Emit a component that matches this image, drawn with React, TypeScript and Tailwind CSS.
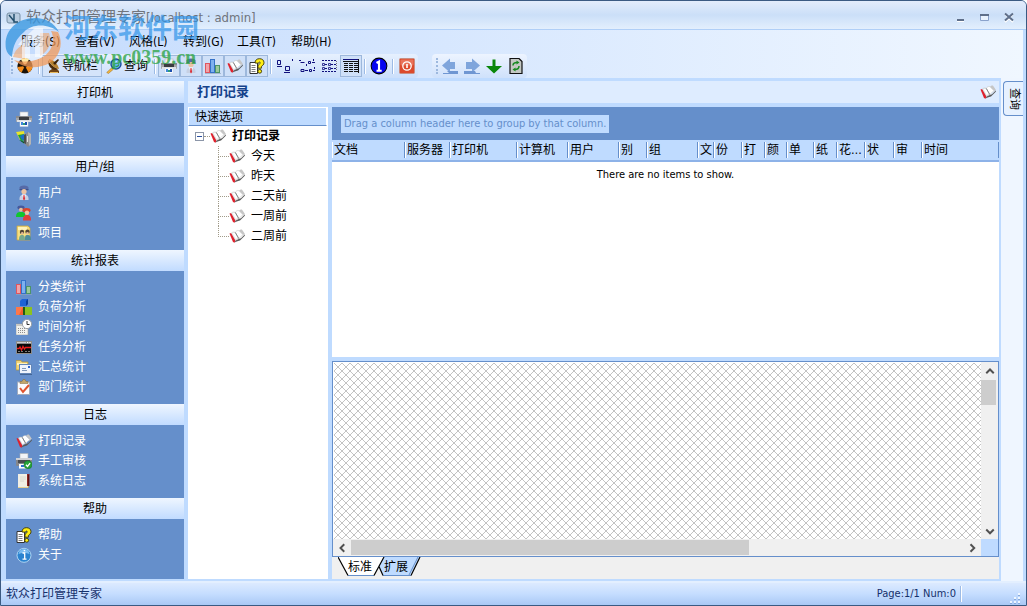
import React from "react";

type IconProps = { className?: string };

function Svg({ children, className = "size-4" }: { children: React.ReactNode; className?: string }) {
  return (
    <svg viewBox="0 0 16 16" className={`shrink-0 ${className}`} aria-hidden="true">
      {children}
    </svg>
  );
}

const PrinterIcon = ({ className }: IconProps) => (
  <Svg className={className}>
    <rect x="4" y="1" width="8" height="5" fill="#f4f6f8" stroke="#b5b9bf" strokeWidth=".6" />
    <rect x="0" y="5" width="16" height="6" rx="1" fill="#a4a6aa" />
    <rect x="0" y="5" width="16" height="2" fill="#8a8c90" />
    <rect x="3" y="6" width="10" height="3" fill="#3a3c40" />
    <rect x="1" y="9" width="14" height="2" fill="#dfe1e4" />
    <rect x="4" y="10" width="8" height="5.500" fill="#fff" stroke="#c9d2dc" strokeWidth=".5" />
    <rect x="5" y="11" width="2" height="3" fill="#3f86dc" />
    <rect x="7" y="12" width="2" height="2" fill="#2b9c78" />
    <rect x="9" y="11" width="2" height="3" fill="#1d4fae" />
  </Svg>
);

const ServerIcon = () => (
  <Svg>
    <path d="M0 1l8-1 1 8-5 1z" fill="#e9e42a" />
    <path d="M2 4l6-1 2 6-5 1z" fill="#18a336" />
    <path d="M4 5l4-2 2 5-4 1z" fill="#1c6fc4" />
    <path d="M3 9l6 2-1 1.500z" fill="#0b5c1d" />
    <path d="M8 4l4-3 3 2v10l-3 3-4-4z" fill="#8c8c8c" />
    <path d="M8 4l2-1v10l-2-1z" fill="#4d4d4d" />
    <path d="M12 1l3 2v10l-2 2z" fill="#b5b5b5" />
    <path d="M11 5h1v6h-1z" fill="#e0e0e0" />
  </Svg>
);

const UserIcon = ({ className }: IconProps) => (
  <Svg className={className}>
    <ellipse cx="8" cy="3" rx="4.600" ry="2.500" fill="#566aa8" />
    <path d="M3 4.200h10l-1 1H4z" fill="#34457d" />
    <circle cx="8" cy="6.500" r="2.600" fill="#ecc4a4" />
    <path d="M3.500 15c-.3-4 1.500-5.500 4.500-5.500s4.800 1.500 4.500 5.500z" fill="#c6d0e3" />
    <path d="M6 9.500h4L8 15z" fill="#fff" />
    <path d="M7.500 10h1l.6 4-1.100 1.500L7 14z" fill="#d8323c" />
  </Svg>
);

const GroupIcon = () => (
  <Svg>
    <ellipse cx="5" cy="2.500" rx="3.600" ry="2" fill="#46589a" />
    <circle cx="5" cy="4.800" r="2" fill="#e6bd9b" />
    <path d="M0 12c0-4 1.500-5 5-5s4.500 1 4 5z" fill="#10c72c" />
    <ellipse cx="10.500" cy="5.300" rx="4" ry="2.200" fill="#d9442c" />
    <circle cx="11" cy="7.800" r="2.200" fill="#f0c49d" />
    <path d="M7 15.500c-.2-3.500 1-5.500 4-5.500s4.200 2 4 5.500z" fill="#e0403a" />
  </Svg>
);

const ProjectIcon = () => (
  <Svg>
    <path d="M1 1h11l2 2v12H1z" fill="#f7df7f" stroke="#c9a642" strokeWidth=".8" />
    <path d="M2 2h9v3H2z" fill="#fff3b8" />
    <circle cx="6" cy="7" r="2.200" fill="#504538" />
    <circle cx="11.500" cy="6.800" r="2.200" fill="#504538" />
    <circle cx="6.300" cy="8.200" r="1.300" fill="#e2b994" />
    <circle cx="11.500" cy="8.200" r="1.300" fill="#e2b994" />
    <path d="M3 15c0-4 1-5 3-5s3 1 3 5z" fill="#77a98b" />
    <path d="M9 15c0-4 0-5 2.500-5s3.500 1 3.500 5z" fill="#4d8d9b" />
  </Svg>
);

const ChartIcon = () => (
  <Svg>
    <rect x=".5" y="5.500" width="4" height="9" fill="#f0a3a8" stroke="#e0555e" />
    <rect x="5.500" y="1.500" width="4" height="13" fill="#7db0ee" stroke="#3572c8" />
    <rect x="10.500" y="7.500" width="4" height="7" fill="#9cc99c" stroke="#4c9468" />
    <path d="M0 15.500h16" stroke="#8fa3c0" strokeWidth=".7" />
  </Svg>
);

const CubesIcon = () => (
  <Svg>
    <path d="M4 2l2-2h6v5l-2 2H4z" fill="#1d62d6" />
    <path d="M10 2l2-2v5l-2 2z" fill="#0c3d9b" />
    <rect x="0" y="8" width="7" height="8" fill="#f15a2c" />
    <path d="M0 8h7l-4 8H0z" fill="#ff7748" />
    <rect x="7" y="8" width="2" height="8" fill="#1d5c14" />
    <rect x="9" y="8" width="7" height="8" fill="#8cc21f" />
  </Svg>
);

const TimeIcon = () => (
  <Svg>
    <rect x="0" y="5" width="12" height="11" fill="#f2f2ee" stroke="#9a9a94" strokeWidth=".6" />
    <rect x="0" y="5" width="12" height="2" fill="#c8c8c4" />
    <path d="M2 9.500h8M2 11.500h8M2 13.500h8" stroke="#8e8e8e" strokeDasharray="1 1" />
    <circle cx="11" cy="5" r="4.600" fill="#fff" stroke="#9aa0a6" />
    <path d="M11 2v3.500h2.500" fill="none" stroke="#333" />
  </Svg>
);

const TaskIcon = () => (
  <Svg>
    <rect x="0" y="2" width="16" height="13" fill="#8b8b8b" />
    <path d="M1 3.500h9" stroke="#ccc" />
    <path d="M11 3.500h4" stroke="#fff" strokeDasharray="1 .7" />
    <rect x="1" y="5" width="14" height="9" fill="#0a0a0a" />
    <path d="M1 9.500h2l1-1.500 1.500 3 1.500-3.500L8.500 10l1-1.500H15" fill="none" stroke="#ee1c1c" strokeWidth="1.300" />
    <path d="M2 12.500h5M9 12.500h5" stroke="#7a7a7a" strokeDasharray="2 1" />
  </Svg>
);

const SummaryIcon = () => (
  <Svg>
    <path d="M0 1.500h5l1 1.500h6v8H0z" fill="#f2d478" stroke="#b59335" strokeWidth=".7" />
    <path d="M1 4h10v2H1z" fill="#fff2bd" />
    <rect x="3.500" y="5.500" width="12" height="9" fill="#eef4fc" stroke="#6286b8" />
    <rect x="12" y="7" width="2" height="2" fill="#2e66ce" />
    <path d="M6 9.500h4M6 11.500h5" stroke="#7e97ba" />
    <path d="M4 15.500h12" stroke="#34537f" strokeWidth=".7" />
  </Svg>
);

const DeptIcon = () => (
  <Svg>
    <rect x="1.500" y="3" width="12" height="12.500" fill="#fbfbfd" stroke="#9faabd" />
    <path d="M4 4.500V2.500h2l1-2h2l1 2h2v2z" fill="#c3a76b" stroke="#82693a" strokeWidth=".5" />
    <path d="M4 9l3 4 6-7" fill="none" stroke="#e0532d" strokeWidth="2" />
  </Svg>
);

const BookIcon = ({ className }: IconProps) => (
  <Svg className={className}>
    <path d="M.5 5.500L2.300 5l4.200 7.500-1 2.200L4 14z" fill="#e0202c" />
    <path d="M5.500 14.600l1.200-2 3-1.600 2.300-.8 4-4-.2 1.500L11 12.500l-1.800.6-1.500.4z" fill="#5a5a5a" />
    <path d="M2.300 5c1-.9 2.700-1.400 4-.6l3.600 6.300c-1.500-.2-2.500.5-3.300 1.800z" fill="#ededed" stroke="#b4b4b4" strokeWidth=".4" />
    <path d="M3.800 5.500c.8-.5 1.500-.5 2.200-.1l2.600 4.500c-.9.1-1.400.4-1.900.9z" fill="#fff" />
    <path d="M6.300 4.400c.8-1.600 2.200-2.300 3.700-1.700l4.300 4.400c-1.800.4-3.300 1.900-4.400 3.600z" fill="#fff" stroke="#b4b4b4" strokeWidth=".4" />
    <path d="M6.300 4.400l3.600 6.300" stroke="#7d7d7d" strokeWidth=".9" />
    <path d="M10 2.700c.9-1.100 2-1.400 2.900-1.100l2.900 4.200-1.500 1.300z" fill="#c6c6c6" />
  </Svg>
);

const AuditIcon = () => (
  <Svg>
    <rect x="4" y=".5" width="8" height="5" fill="#f2f4f7" stroke="#a9adb3" strokeWidth=".6" />
    <rect x="0" y="5" width="16" height="8" rx="1" fill="#85878c" />
    <rect x="0" y="5" width="16" height="2" fill="#cfd1d5" />
    <rect x="2" y="7" width="12" height="3" fill="#4a4c50" />
    <rect x="3" y="11" width="8" height="4.500" fill="#fff" />
    <rect x="5" y="12" width="3" height="2" fill="#2d6fd0" />
    <circle cx="12" cy="11.800" r="4" fill="#28a33a" stroke="#117225" strokeWidth=".5" />
    <path d="M10 11.800l1.500 1.700 2.600-3.300" fill="none" stroke="#fff" strokeWidth="1.300" />
  </Svg>
);

const LogIcon = () => (
  <Svg>
    <path d="M2 1h9l1 1v13H2z" fill="#f1efe4" />
    <path d="M4 4h6M4 6h6M4 8h4" stroke="#d6d3c6" strokeWidth=".8" />
    <path d="M11 1h2.500v12H11z" fill="#8d2320" />
    <path d="M2 14h9l2-1v1.500H2z" fill="#d9b23f" />
    <path d="M12.500 2v11" stroke="#5d1210" />
  </Svg>
);

const HelpIcon = ({ className }: IconProps) => (
  <Svg className={className}>
    <path d="M1 4.500h7.500v11H1z" fill="#fff" stroke="#333" />
    <path d="M2.500 7.500h4M2.500 9.500h4M2.500 11.500h4M2.500 13.500h4" stroke="#7d7d7d" />
    <path d="M6 5c0-3 2-4.300 4.500-4.300S15 2 15 4.700c0 2-1.500 2.800-2.600 3.800v1.700H9V8.300C9 6.500 11.200 6 11.200 4.700c0-.9-1.600-.8-1.600.5z" fill="#ffee12" stroke="#3b3600" strokeWidth=".9" />
    <circle cx="10.700" cy="13.300" r="1.900" fill="#ffee12" stroke="#3b3600" strokeWidth=".9" />
  </Svg>
);

const AboutIcon = () => (
  <Svg>
    <circle cx="8" cy="8.300" r="7" fill="#2b83cf" stroke="#b9dbf5" strokeWidth=".9" />
    <path d="M2.500 7C3 3.500 5 2 8 2s5 1.500 5.500 5C11 5.500 5 5.500 2.500 7z" fill="#7cbcf0" />
    <path d="M6.500 6h2.200v6M6.500 12.200h4M7.700 3.700h1.500" fill="none" stroke="#fff" strokeWidth="1.300" />
  </Svg>
);

const RadiationIcon = () => (
  <Svg>
    <circle cx="8" cy="8" r="7.600" fill="#191108" />
    <path d="M8 8L3.800 1.300a7.800 7.800 0 018.400 0z" fill="#ffe9a3" />
    <path d="M8 8L.5 9a7.600 7.600 0 004 5.500z" fill="#f28c1c" />
    <path d="M8 8l7.500 1a7.600 7.600 0 01-4 5.500z" fill="#f28c1c" />
    <circle cx="8" cy="8" r="1.800" fill="#191108" />
  </Svg>
);

const CompassIcon = () => (
  <Svg>
    <path d="M3 15h10v-2l-2-2H6l-3 2z" fill="#6e4315" />
    <path d="M2 2c0 5 2 9 7 10l3-1C7 9 4 6 2 2z" fill="#4a2c0c" />
    <path d="M3 1c5 1 9 5 10 10C8 10 3 6 3 1z" fill="#b78332" />
    <path d="M7 5l5-4 1 1-4 5z" fill="#3b240b" />
    <path d="M4 14.500h8" stroke="#e7b759" />
  </Svg>
);

const SearchIcon = () => (
  <Svg>
    <path d="M.7 14.500L6 9.500l1.500 1.700-5 4.300z" fill="#f0b43c" stroke="#9b6a16" strokeWidth=".5" />
    <circle cx="10" cy="6" r="5" fill="#6bb4f0" stroke="#1b4f9c" strokeWidth="1.400" />
    <path d="M7 5.500C7.500 3.500 9 2.700 11 3c-.5 1.500-2 2.500-4 2.500z" fill="#e2f5ff" />
    <path d="M9.500 8.500c1.800.2 3-.6 3.300-2.200" fill="none" stroke="#2f9d4c" strokeWidth="1.200" />
  </Svg>
);

const LargeIconsIcon = () => (
  <Svg>
    <path d="M.5 2.500h3v4h-3zM8.500 8.500h4v4h-4z" fill="none" stroke="#10107c" />
    <path d="M0 8.500h5M7 14.500h6M15.500 1v2" stroke="#10107c" />
  </Svg>
);

const SmallIconsIcon = () => (
  <Svg>
    <path d="M0 2.500h2M1.500 4.500h4M9.500 3.500h2v2h-2zM2 11.500h3v2H2zM10.500 11.500h2v2h-2z" fill="none" stroke="#10107c" />
    <path d="M13 4.500h3M6 12.500h3M14 12.500h2M14.500 1v2M7.500 6v2M15.500 9v2" stroke="#10107c" />
  </Svg>
);

const ListIconsIcon = () => (
  <Svg>
    <path d="M1 2.500h15M1 13.500h15" stroke="#10107c" strokeDasharray="2 1" />
    <path d="M1.500 5.500h2v2h-2zM7.500 5.500h2v2h-2zM1.500 9.500h2v2h-2zM7.500 9.500h2v2h-2z" fill="none" stroke="#10107c" strokeWidth=".8" />
    <path d="M4 6.500h2M10 6.500h5M4 10.500h2M10 10.500h5" stroke="#10107c" strokeDasharray="2 1" />
    <path d="M15.500 3v10" stroke="#777" strokeDasharray="1 1" />
  </Svg>
);

const DetailsIcon = () => (
  <Svg>
    <path d="M0 1.500h16" stroke="#10107c" />
    <path d="M0 3.500h16" stroke="#111" />
    <path d="M1 5.500h14M1 7.500h14M1 9.500h14M1 11.500h14M1 13.500h14" stroke="#111" strokeDasharray="4 1" />
    <path d="M15.500 1v14" stroke="#111" />
  </Svg>
);

const OneIcon = () => (
  <Svg className="size-[18px]">
    <circle cx="8" cy="8" r="7" fill="#0505f0" stroke="#000" strokeWidth=".9" />
    <path d="M5.800 5.300L8 4v8M5.800 12.200h4.600" fill="none" stroke="#fff" strokeWidth="1.900" />
  </Svg>
);

const PowerIcon = () => (
  <Svg>
    <rect x=".5" y=".5" width="15" height="15" rx="1" fill="#dc4a2c" stroke="#c98f83" />
    <rect x="1.500" y="1.500" width="13" height="6" rx="1" fill="#e8735a" />
    <circle cx="8" cy="8" r="4.200" fill="none" stroke="#fff" strokeWidth="1.300" />
    <path d="M8 6v4" stroke="#fff" strokeWidth="1.600" />
  </Svg>
);

const BackIcon = () => (
  <Svg>
    <path d="M0 7.500L8 .5V4h5v7H8v3.500z" fill="#7fa5dc" />
    <path d="M5 13h11v3H1v-1h6z" fill="#6f96d2" />
  </Svg>
);

const ForwardIcon = () => (
  <Svg>
    <path d="M16 7.500L8 .5V4H2v7h6v3.500z" fill="#7fa5dc" />
    <path d="M0 13h11l1 2h4v1H0z" fill="#6f96d2" />
  </Svg>
);

const DownIcon = () => (
  <Svg>
    <path d="M6.500 1.500h3V8H16l-8 7.500L0 8h6.500z" fill="#0a870a" />
  </Svg>
);

const RefreshIcon = () => (
  <Svg>
    <path d="M2 .5h9l3 3v12H2z" fill="#c4c8c4" stroke="#111" strokeWidth="1.200" />
    <path d="M5 7.500c0-2.500 1.500-3 4-3M11 8c0 3-1.500 3.500-4 3.500" fill="none" stroke="#188a22" strokeWidth="1.500" />
    <path d="M8.500 2.500l3 2-3 2zM7.500 9.500l-3 2 3 2z" fill="#188a22" />
  </Svg>
);

const groups = [
  { title: "打印机", items: [{ label: "打印机", Icon: PrinterIcon }, { label: "服务器", Icon: ServerIcon }] },
  {
    title: "用户/组",
    items: [
      { label: "用户", Icon: UserIcon },
      { label: "组", Icon: GroupIcon },
      { label: "项目", Icon: ProjectIcon },
    ],
  },
  {
    title: "统计报表",
    items: [
      { label: "分类统计", Icon: ChartIcon },
      { label: "负荷分析", Icon: CubesIcon },
      { label: "时间分析", Icon: TimeIcon },
      { label: "任务分析", Icon: TaskIcon },
      { label: "汇总统计", Icon: SummaryIcon },
      { label: "部门统计", Icon: DeptIcon },
    ],
  },
  {
    title: "日志",
    items: [
      { label: "打印记录", Icon: BookIcon },
      { label: "手工审核", Icon: AuditIcon },
      { label: "系统日志", Icon: LogIcon },
    ],
  },
  { title: "帮助", items: [{ label: "帮助", Icon: HelpIcon }, { label: "关于", Icon: AboutIcon }] },
];

const columns: { label: string; width?: number }[] = [
  { label: "文档", width: 73 },
  { label: "服务器", width: 45 },
  { label: "打印机", width: 67 },
  { label: "计算机", width: 51 },
  { label: "用户", width: 51 },
  { label: "别", width: 28 },
  { label: "组", width: 51 },
  { label: "文", width: 16 },
  { label: "份", width: 28 },
  { label: "打", width: 23 },
  { label: "颜", width: 22 },
  { label: "单", width: 27 },
  { label: "纸", width: 23 },
  { label: "花…", width: 28 },
  { label: "状", width: 29 },
  { label: "审", width: 28 },
  { label: "时间" },
];

const days = ["今天", "昨天", "二天前", "一周前", "二周前"];

function TitleBar() {
  return (
    <header className="flex h-7 shrink-0 items-end bg-linear-to-b from-[#e3ecfb] via-[#cbdff8] to-[#e3effd] pl-[5px] pr-[9px]">
      <div className="flex flex-1 items-center gap-1 text-[#70747c]">
        <Svg>
          <rect x="1" y="3" width="13" height="10" rx="2" fill="#b9cde0" stroke="#7890a5" />
          <path d="M3 5l5 6M8 4v8h4" fill="none" stroke="#24506e" strokeWidth="1.500" />
        </Svg>
        <h1 className="text-[15px] leading-[22px]">
          软众打印管理专家<span className="text-[13px]">[localhost : admin]</span>
        </h1>
      </div>
      <div className="flex items-center gap-2 pb-1 text-[#5f6f8a]">
        <button type="button" aria-label="最小化" className="size-4">
          <Svg><path d="M4 11h7" stroke="currentColor" strokeWidth="2" /><path d="M4 12.500h7" stroke="#fff" /></Svg>
        </button>
        <button type="button" aria-label="最大化" className="size-4">
          <Svg><path d="M3.500 6.500h8v5h-8z" fill="#eaf3fe" stroke="#8aa2cb" /><path d="M3 6h9" stroke="currentColor" strokeWidth="2" /></Svg>
        </button>
        <button type="button" aria-label="关闭" className="size-4">
          <Svg><path d="M4 5l8 8M12 5l-8 8" stroke="#fff" strokeWidth="2" /><path d="M4 4.500l8 7M12 4.500l-8 7" stroke="currentColor" strokeWidth="2" /></Svg>
        </button>
      </div>
    </header>
  );
}

function MenuBar() {
  return (
    <nav className="flex h-6 shrink-0 items-center gap-4 pl-[17px] text-black">
      {["服务(S)", "查看(V)", "风格(L)", "转到(G)", "工具(T)", "帮助(H)"].map((m) => (
        <button key={m} type="button" className="w-[38px] whitespace-nowrap text-left leading-5">
          {m}
        </button>
      ))}
    </nav>
  );
}

function Sep() {
  return <span className="mx-[2px] h-[15px] w-[2px] shrink-0 border-l border-r border-l-[#9dbbe5] border-r-white" />;
}

function Grip() {
  return <span className="mx-px h-4 shrink-0 border-l-2 border-dotted border-[#9db8de]" />;
}

function Tool({ label, on, children }: { label: string; on?: boolean; children: React.ReactNode }) {
  return (
    <button
      type="button"
      aria-label={label}
      className={`flex h-[22px] w-[22px] shrink-0 items-center justify-center ${on ? "border border-[#9db8dc] bg-[#cfe0f8]" : ""}`}
    >
      {children}
    </button>
  );
}

function ToolBars() {
  return (
    <div className="flex h-6 shrink-0 items-center gap-[14px] pl-[6px]">
      <div className="flex h-6 items-center rounded-sm bg-linear-to-b from-[#e6f0fe] to-[#cbdffb]">
        <Grip />
        <Tool label="服务"><RadiationIcon /></Tool>
        <Sep />
        <button type="button" className="flex h-[22px] w-[60px] shrink-0 items-center justify-center whitespace-nowrap border border-[#9db8dc] bg-[#d5e4fa]">
          <CompassIcon />
          导航栏
        </button>
        <button type="button" className="flex h-[22px] w-[50px] shrink-0 items-center justify-center gap-0.5 whitespace-nowrap">
          <SearchIcon />
          查询
        </button>
        <Sep />
        <Tool label="打印机" on><PrinterIcon /></Tool>
        <Tool label="用户" on><UserIcon /></Tool>
        <Tool label="统计" on><ChartIcon /></Tool>
        <Tool label="记录" on><BookIcon /></Tool>
        <Tool label="帮助" on><HelpIcon /></Tool>
        <Sep />
        <Tool label="大图标"><LargeIconsIcon /></Tool>
        <Tool label="小图标"><SmallIconsIcon /></Tool>
        <Tool label="列表"><ListIconsIcon /></Tool>
        <Tool label="详细资料" on><DetailsIcon /></Tool>
        <Sep />
        <Tool label="第一页"><OneIcon /></Tool>
        <Sep />
        <Tool label="退出"><PowerIcon /></Tool>
      </div>
      <div className="flex h-6 items-center rounded-sm bg-linear-to-b from-[#edf4ff] to-[#cfe1fb] pl-[3px]">
        <Grip />
        <Tool label="后退"><BackIcon /></Tool>
        <Tool label="前进"><ForwardIcon /></Tool>
        <Tool label="下载"><DownIcon /></Tool>
        <Tool label="刷新"><RefreshIcon /></Tool>
      </div>
    </div>
  );
}

function Sidebar() {
  return (
    <aside className="flex w-[178px] shrink-0 flex-col bg-[#658fcb]">
      {groups.map((g) => (
        <section key={g.title} className="first:bg-[#eff6ff] first:pt-px">
          <h2 className="h-[21px] bg-linear-to-b from-[#eff6ff] to-[#c1dbff] text-center leading-[22px] text-black">{g.title}</h2>
          <ul className="bg-[#658fcb] pb-[7px] pl-[10px] pt-[6px] text-white">
            {g.items.map(({ label, Icon }) => (
              <li key={label}>
                <a href="#" className="flex h-5 items-center gap-[6px]">
                  <Icon />
                  {label}
                </a>
              </li>
            ))}
          </ul>
        </section>
      ))}
    </aside>
  );
}

function QuickTree() {
  return (
    <section className="w-[140px] shrink-0 bg-white">
      <h3 className="mr-px h-[19px] border border-b-[#658fcb] border-l-white border-r-white border-t-white bg-[#bfdbff] pl-[6px] leading-[18px] text-black">
        快速选项
      </h3>
      <div className="flex h-5 items-center pl-[7px] font-bold text-black">
        <button type="button" aria-label="折叠" className="flex size-[9px] items-center justify-center border border-[#8c96a8] bg-white">
          <span className="h-px w-[5px] bg-[#2a4fa0]" />
        </button>
        <span className="w-[6px] border-t border-dotted border-[#a09a88]" />
        <BookIcon />
        <span className="pl-[6px]">打印记录</span>
      </div>
      <ul className="pl-[30px] text-black">
        {days.map((d, i) => (
          <li key={d} className="flex h-5 items-center">
            <span className="flex h-5 w-[11px] flex-col">
              <span className="h-[11px] border-b border-l border-dotted border-[#a09a88]" />
              <span className={`flex-1 ${i < days.length - 1 ? "border-l border-dotted border-[#a09a88]" : ""}`} />
            </span>
            <BookIcon />
            <span className="pl-[6px]">{d}</span>
          </li>
        ))}
      </ul>
    </section>
  );
}

function Grid() {
  return (
    <section className="flex h-[250px] shrink-0 flex-col bg-white">
      <div className="flex h-[33px] items-center bg-[#658fcb] pl-[9px]">
        <span className="h-[18px] bg-[#bfdbff] px-[3px] text-[11px] leading-[17px] text-[#658fcb]">
          Drag a column header here to group by that column.
        </span>
      </div>
      <table className="w-full table-fixed border-collapse text-black">
        <colgroup>
          {columns.map((c, i) => (
            <col key={i} style={c.width ? { width: c.width } : undefined} />
          ))}
        </colgroup>
        <thead>
          <tr className="h-[21px] border-b-2 border-[#8db2e8] bg-[#bfdbff]">
            {columns.map((c, i) => (
              <th key={i} className="p-0 text-left font-normal">
                <div className="h-4 overflow-hidden whitespace-nowrap border-l border-r border-l-white border-r-[#658fcb] pl-px leading-4">
                  {c.label}
                </div>
              </th>
            ))}
          </tr>
        </thead>
        <tbody>
          <tr>
            <td colSpan={columns.length} className="pt-1 text-center text-[11px] leading-[18px]">
              There are no items to show.
            </td>
          </tr>
        </tbody>
      </table>
    </section>
  );
}

function Arrow({ d, label, className }: { d: string; label: string; className: string }) {
  return (
    <button type="button" aria-label={label} className={`flex shrink-0 items-center justify-center ${className}`}>
      <Svg className="size-3">
        <path d={d} fill="none" stroke="#505050" strokeWidth="2.600" />
      </Svg>
    </button>
  );
}

function Preview() {
  return (
    <section className="flex min-h-0 flex-1 flex-col bg-[#f0f0f0]">
      <div className="flex min-h-0 flex-1 flex-col border border-[#658fcb] bg-white">
        <div className="flex min-h-0 flex-1">
          <div className="min-w-0 flex-1 pl-px pt-px">
            <svg className="block h-full w-full" aria-hidden="true">
              <defs>
                <pattern id="hatch" width="8" height="8" patternUnits="userSpaceOnUse">
                  <path
                    shapeRendering="crispEdges"
                    fill="#c3c3c3"
                    d="M0 0h1v1h-1zM1 1h1v1h-1zM2 2h1v1h-1zM3 3h1v1h-1zM4 4h1v1h-1zM5 5h1v1h-1zM6 6h1v1h-1zM7 7h1v1h-1zM7 0h1v1h-1zM6 1h1v1h-1zM5 2h1v1h-1zM4 3h1v1h-1zM3 4h1v1h-1zM2 5h1v1h-1zM1 6h1v1h-1zM0 7h1v1h-1z"
                  />
                </pattern>
              </defs>
              <rect width="100%" height="100%" fill="url(#hatch)" />
            </svg>
          </div>
          <div className="flex w-[17px] shrink-0 flex-col bg-[#f0f0f0]">
            <Arrow label="向上" d="M3 11l5-5 5 5" className="h-[18px]" />
            <div className="mr-[2px] h-[25px] bg-[#cdcdcd]" />
            <div className="flex-1" />
            <Arrow label="向下" d="M3 6l5 5 5-5" className="h-[17px]" />
          </div>
        </div>
        <div className="flex h-[17px] shrink-0">
          <div className="flex flex-1 bg-[#f0f0f0]">
            <Arrow label="向左" d="M11 3l-5 5 5 5" className="w-[18px]" />
            <div className="my-px flex-1">
              <div className="h-full w-[65%] bg-[#cdcdcd]" />
            </div>
            <Arrow label="向右" d="M6 3l5 5-5 5" className="w-[18px]" />
          </div>
          <div className="w-[17px] bg-[#bfdbff]" />
        </div>
      </div>
      <div className="relative flex h-[22px] shrink-0 items-start gap-3 pl-4 text-black">
        <svg className="absolute left-[6px] top-0" width="84" height="20" aria-hidden="true">
          <path d="M0 0h46L36 18H10z" fill="#fff" />
          <path d="M46 0h36L73 18H45l-4-9z" fill="#bfdbff" />
          <path d="M10 18.500h26M45 18.500h28" stroke="#658fcb" />
          <path d="M0 0l10 18.500M46 0L36 18.500M41 9.500l4 9M82 0l-9 18.500" fill="none" stroke="#000" strokeWidth="1.200" />
          <path d="M80 0l-9 18" stroke="#658fcb" />
        </svg>
        <button type="button" className="relative leading-[21px]">标准</button>
        <button type="button" className="relative leading-[21px]">扩展</button>
      </div>
    </section>
  );
}

function Watermark() {
  return (
    <div className="pointer-events-none absolute left-[3px] top-3 flex items-start" aria-hidden="true">
      <svg className="mt-[2px] h-[54px] w-[60px]" viewBox="0 0 60 54">
        <path d="M2 34C-1 17 12 3 31 3c11 0 19 5 24 14C45 9 29 8 20 17c-8 7-11 13-12 25C5 40 3 38 2 34z" fill="#3a97e0" fillOpacity=".8" />
        <path d="M54 17c7 14 0 30-16 34-10 3-20 1-28-6 14 4 30 0 36-10 4-7 4-13 1-19z" fill="#f29a58" fillOpacity=".75" />
        <path d="M9 42c2-7 6-11 12-13v15zM36 18h9c3 9 1 17-9 23z" fill="#f4a568" fillOpacity=".6" />
        <path d="M17 26l14-13h8v29h-8V25h-5v18h-8V30h-4z" fill="#fbfcff" fillOpacity=".65" />
      </svg>
      <div className="font-bold">
        <p className="h-8 text-[27px] leading-8 text-[#2e93e8]/70">河东软件园</p>
        <p className="font-['Liberation_Serif',serif] text-[20px] leading-6 text-[#2fa548]/80">www.pc0359.cn</p>
      </div>
    </div>
  );
}

export default function App() {
  return (
    <div className="relative flex h-screen w-full flex-col overflow-hidden rounded-t-md border border-[#3b5a82] bg-[#bfdbff] font-['DejaVu_Sans_Condensed','Noto_Sans_CJK_SC',sans-serif] text-[12px] leading-4">
      <TitleBar />
      <div className="flex min-h-0 flex-1 flex-col border-t border-[#b0cff7] px-[3px]">
        <div className="flex min-h-0 flex-1 flex-col bg-linear-to-r from-[#c4dbfd] to-[#f0f7ff]">
          <MenuBar />
          <ToolBars />
          <div className="flex min-h-0 flex-1">
            <div className="flex min-w-0 flex-1 gap-1 bg-[#bfdbff] pb-[2px] pl-[2px] pr-[2px] pt-[3px]">
              <Sidebar />
              <main className="flex min-w-0 flex-1 flex-col gap-1">
                <div className="flex h-[22px] shrink-0 items-center justify-between bg-[#deecff] pl-[9px] pr-[3px]">
                  <h2 className="text-[13px] font-bold text-[#15428b]">打印记录</h2>
                  <BookIcon />
                </div>
                <div className="flex min-h-0 flex-1 gap-1">
                  <QuickTree />
                  <div className="flex min-w-0 flex-1 flex-col gap-1">
                    <Grid />
                    <Preview />
                  </div>
                </div>
              </main>
            </div>
            <div className="w-[22px] shrink-0 bg-[#eff6ff] pl-[2px] pt-[3px]">
              <button
                type="button"
                className="flex h-[35px] w-5 items-center justify-center rounded-l border border-r-0 border-[#658fcb] bg-[#e6f1ff] text-[11px] leading-4 text-black [text-orientation:sideways] [writing-mode:vertical-rl]"
              >
                查询
              </button>
            </div>
          </div>
        </div>
      </div>
      <footer className="flex h-6 shrink-0 items-center border-t-2 border-t-[#e3efff] bg-linear-to-b from-[#dceaff] via-[#c5ddff] to-[#a9c8f5] pl-[5px] pr-1 text-[#15306b]">
        <span className="flex-1">软众打印管理专家</span>
        <span className="pr-1 text-[11px]">Page:1/1 Num:0</span>
        <span className="h-4 w-[2px] border-l border-r border-l-[#9dbbe5] border-r-white" />
        <svg className="ml-12 size-3 self-end" viewBox="0 0 12 12" aria-hidden="true">
          <path d="M8 0h2v2H8zM4 4h2v2H4zM8 4h2v2H8zM0 8h2v2H0zM4 8h2v2H4zM8 8h2v2H8z" fill="#eef6ff" />
          <path d="M8 2h2v1H8zM4 6h2v1H4zM8 6h2v1H8zM0 10h2v1H0zM4 10h2v1H4zM8 10h2v1H8z" fill="#86a9dc" />
        </svg>
      </footer>
      <Watermark />
    </div>
  );
}
